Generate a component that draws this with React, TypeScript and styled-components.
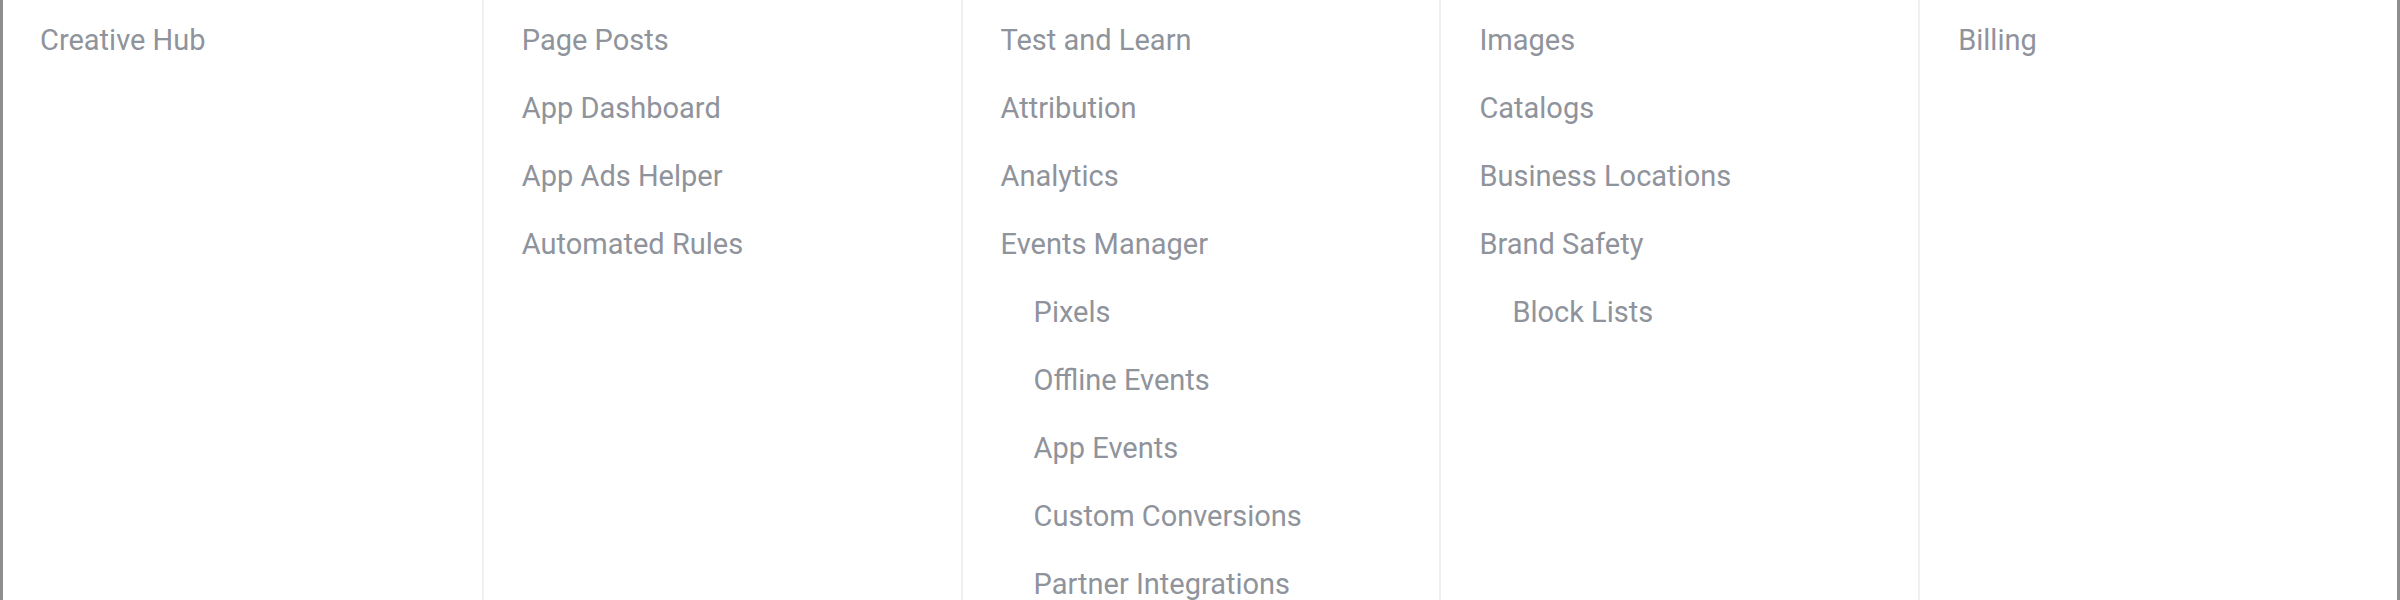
import React from 'react';
import styled, { createGlobalStyle } from 'styled-components';

const GlobalStyle = createGlobalStyle`
    body {
        margin: 0;
        background: #ffffff;
        font-family: Roboto, 'Liberation Sans', sans-serif;
    }
`;

const Frame = styled.div`
    display: grid;
    grid-template-columns: repeat(5, 1fr);
    height: 600px;
    border-left: 3px solid #8e8e8e;
    border-right: 3px solid #8e8e8e;
    overflow: hidden;
`;

const Column = styled.ul`
    list-style: none;
    margin: 0;
    padding: 6px 0 0 38px;
    border-left: 2px solid #efefef;

    &:first-child {
        border-left: none;
        padding-left: 37px;
    }
`;

const Item = styled.li<{ $sub?: boolean }>`
    font-size: 29px;
    line-height: 68px;
    color: #8f939b;
    white-space: nowrap;
    padding-left: ${(p) => (p.$sub ? '33px' : '0')};
`;

type Entry = { label: string; sub?: boolean };

const columns: Entry[][] = [
    [{ label: 'Creative Hub' }],
    [
        { label: 'Page Posts' },
        { label: 'App Dashboard' },
        { label: 'App Ads Helper' },
        { label: 'Automated Rules' },
    ],
    [
        { label: 'Test and Learn' },
        { label: 'Attribution' },
        { label: 'Analytics' },
        { label: 'Events Manager' },
        { label: 'Pixels', sub: true },
        { label: 'Offline Events', sub: true },
        { label: 'App Events', sub: true },
        { label: 'Custom Conversions', sub: true },
        { label: 'Partner Integrations', sub: true },
    ],
    [
        { label: 'Images' },
        { label: 'Catalogs' },
        { label: 'Business Locations' },
        { label: 'Brand Safety' },
        { label: 'Block Lists', sub: true },
    ],
    [{ label: 'Billing' }],
];

export default function App() {
    return (
        <>
            <GlobalStyle />
            <Frame>
                {columns.map((col, i) => (
                    <Column key={i}>
                        {col.map((e) => (
                            <Item key={e.label} $sub={e.sub}>
                                {e.label}
                            </Item>
                        ))}
                    </Column>
                ))}
            </Frame>
        </>
    );
}
